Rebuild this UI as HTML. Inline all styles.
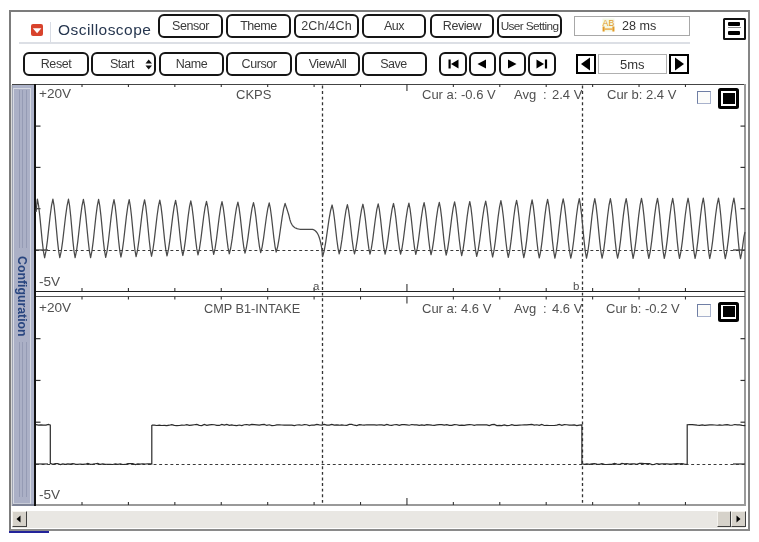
<!DOCTYPE html>
<html><head><meta charset="utf-8">
<style>
*{box-sizing:border-box;margin:0;padding:0}
html,body{width:759px;height:542px;overflow:hidden;background:#fff;font-family:"Liberation Sans",sans-serif;-webkit-font-smoothing:antialiased}
.lbl,.btn,.t{will-change:transform}
.a{position:absolute}
.btn{position:absolute;border:2px solid #151515;border-radius:6px;background:#fff;color:#3a3a3a;font-size:12.5px;text-align:center;white-space:nowrap;line-height:21.5px;letter-spacing:-0.45px}
.nb{position:absolute;border:2px solid #151515;border-radius:6px;background:#fff;top:52px;width:27.5px;height:24px}
.lbl{position:absolute;font-size:13px;color:#505050;white-space:nowrap;line-height:12px}
</style></head><body>
<!-- outer frame -->
<div class="a" style="left:9px;top:10px;width:741px;height:521px;border:2px solid #7c7c7c;border-right-color:#858585;border-bottom-color:#8a8a8a"></div>
<div class="a" style="left:9px;top:530.6px;width:40px;height:2.4px;background:#23239a"></div>

<!-- header row 1 -->
<div class="a" style="left:30.5px;top:24px;width:12px;height:12px;background:#d8432c;border-radius:2px"></div>
<svg class="a" style="left:30.5px;top:24px" width="12" height="12"><path d="M1.8 4.3 L10.4 4.3 L6.1 9.3 Z" fill="#fff"/></svg>
<div class="a" style="left:50px;top:22px;width:1px;height:20px;background:#d8dce4"></div>
<div class="a t" style="left:58px;top:19.5px;font-size:15.5px;letter-spacing:0.45px;color:#26364f;line-height:20px;white-space:nowrap">Oscilloscope</div>
<div class="a" style="left:19px;top:42px;width:671px;height:1.5px;background:#dcdfe5"></div>

<div class="btn" style="left:158px;top:14px;width:65px;height:24px">Sensor</div>
<div class="btn" style="left:226px;top:14px;width:65px;height:24px">Theme</div>
<div class="btn" style="left:294px;top:14px;width:65px;height:24px;letter-spacing:0.2px">2Ch/4Ch</div>
<div class="btn" style="left:362px;top:14px;width:64px;height:24px">Aux</div>
<div class="btn" style="left:430px;top:14px;width:64px;height:24px">Review</div>
<div class="btn" style="left:497px;top:14px;width:65px;height:24px;letter-spacing:-0.6px;font-size:11.8px;line-height:20px">User Setting</div>

<div class="a" style="left:574px;top:16px;width:116px;height:20px;border:1px solid #a8a8a8"></div>
<svg class="a" style="left:602px;top:18px" width="13" height="14"><rect x="0.5" y="0.5" width="12" height="13" fill="#f4f8e4"/><text x="0.6" y="7.7" textLength="11.8" lengthAdjust="spacingAndGlyphs" font-size="9.5" font-family="Liberation Sans" fill="#e39a26">AB</text><path d="M1.6 8.6 V13.6 M11.4 8.6 V13.6" stroke="#e39a26" stroke-width="2"/><path d="M2.5 11.1 H10.5" stroke="#e9a540" stroke-width="1.4"/></svg>
<div class="lbl" style="left:622px;top:20px;color:#333;font-size:12.6px">28 ms</div>

<div class="a" style="left:723px;top:18px;width:23px;height:22px;border:2.8px solid #111;border-radius:1.5px"></div>
<div class="a" style="left:728px;top:22px;width:12px;height:4px;background:#000;border-radius:1px"></div>
<div class="a" style="left:727.5px;top:27px;width:13.5px;height:1.4px;background:#8a8a8a"></div>
<div class="a" style="left:728px;top:30.5px;width:12px;height:4px;background:#000;border-radius:1px"></div>

<!-- header row 2 -->
<div class="btn" style="left:23px;top:52px;width:66px;height:24px">Reset</div>
<div class="btn" style="left:91px;top:52px;width:65px;height:24px;text-indent:-3px">Start</div>
<svg class="a" style="left:145px;top:59px" width="8" height="11"><path d="M0.5 4.5 L3.7 0.5 L7 4.5 Z M0.5 6.5 L3.7 10.5 L7 6.5 Z" fill="#111"/></svg>
<div class="btn" style="left:159px;top:52px;width:65px;height:24px">Name</div>
<div class="btn" style="left:226px;top:52px;width:66px;height:24px">Cursor</div>
<div class="btn" style="left:295px;top:52px;width:65px;height:24px">ViewAll</div>
<div class="btn" style="left:362px;top:52px;width:65px;height:24px;text-indent:-2px">Save</div>

<div class="nb" style="left:439px"></div>
<div class="nb" style="left:468.5px"></div>
<div class="nb" style="left:498.5px"></div>
<div class="nb" style="left:528px"></div>
<svg class="a" style="left:430px;top:52px" width="130" height="24">
<path d="M19.6 7.5 V16.5" stroke="#000" stroke-width="2.2"/>
<path d="M21 12 L28.5 7.5 V16.5 Z" fill="#000"/>
<path d="M47.5 12 L56 7.5 V16.5 Z" fill="#000"/>
<path d="M78 7.5 V16.5 L86.5 12 Z" fill="#000"/>
<path d="M106.5 7.5 V16.5 L114 12 Z" fill="#000"/>
<path d="M116 7.5 V16.5" stroke="#000" stroke-width="2.2"/>
</svg>

<div class="a" style="left:576px;top:54px;width:20px;height:20px;border:2.2px solid #000"></div>
<svg class="a" style="left:576px;top:54px" width="20" height="20"><path d="M5 10 L14 3.5 V16.5 Z" fill="#000"/></svg>
<div class="a" style="left:598px;top:54px;width:69px;height:20px;border:1px solid #b0b0b0"></div>
<div class="lbl" style="left:620px;top:59px;color:#333">5ms</div>
<div class="a" style="left:669px;top:54px;width:20px;height:20px;border:2.2px solid #000"></div>
<svg class="a" style="left:669px;top:54px" width="20" height="20"><path d="M6 3.5 V16.5 L15 10 Z" fill="#000"/></svg>

<!-- sidebar -->
<div class="a" style="left:10.5px;top:85px;width:1.5px;height:421px;background:#dadada"></div>
<div class="a" style="left:12px;top:84px;width:23px;height:422px;background:#adb3c9;border-left:1px solid #9ea3b2;border-bottom:2px solid #7d8396"></div>
<div class="a" style="left:13px;top:87.5px;width:18px;height:416px;border:1.5px solid #d6d9e2;border-bottom-color:#c8ccd8;background:#abb0c6"></div>
<div class="a" style="left:18.5px;top:90px;width:1px;height:158px;background:#959bb4"></div>
<div class="a" style="left:22px;top:90px;width:1px;height:158px;background:#959bb4"></div>
<div class="a" style="left:25.5px;top:90px;width:1px;height:158px;background:#959bb4"></div>
<div class="a" style="left:18.5px;top:342px;width:1px;height:155px;background:#959bb4"></div>
<div class="a" style="left:22px;top:342px;width:1px;height:155px;background:#959bb4"></div>
<div class="a" style="left:25.5px;top:342px;width:1px;height:155px;background:#959bb4"></div>
<div class="a t" style="left:-18px;top:288.5px;width:80px;height:14px;transform:rotate(90deg);font-size:12.3px;font-weight:bold;color:#28457f;line-height:14px;text-align:center;white-space:nowrap">Configuration</div>
<!-- graph frame -->
<div class="a" style="left:12px;top:83.5px;width:734px;height:1.5px;background:#444"></div>
<div class="a" style="left:34px;top:84px;width:712px;height:422px;border-right:2px solid #9a9a9a;border-bottom:2px solid #999"></div>
<div class="a" style="left:34px;top:84px;width:2px;height:422px;background:#111"></div>

<!-- chart borders -->
<div class="a" style="left:36px;top:290.5px;width:709px;height:1.5px;background:#222"></div>
<div class="a" style="left:36px;top:296.2px;width:709px;height:1.2px;background:#555"></div>

<svg class="a" style="left:0;top:0" width="759" height="542"><line x1="82.00" y1="84.00" x2="82.00" y2="87.00" stroke="#333" stroke-width="1.1"/>
<line x1="82.00" y1="291.00" x2="82.00" y2="288.00" stroke="#333" stroke-width="1.1"/>
<line x1="128.42" y1="84.00" x2="128.42" y2="87.00" stroke="#333" stroke-width="1.1"/>
<line x1="128.42" y1="291.00" x2="128.42" y2="288.00" stroke="#333" stroke-width="1.1"/>
<line x1="174.84" y1="84.00" x2="174.84" y2="87.00" stroke="#333" stroke-width="1.1"/>
<line x1="174.84" y1="291.00" x2="174.84" y2="288.00" stroke="#333" stroke-width="1.1"/>
<line x1="221.26" y1="84.00" x2="221.26" y2="87.00" stroke="#333" stroke-width="1.1"/>
<line x1="221.26" y1="291.00" x2="221.26" y2="288.00" stroke="#333" stroke-width="1.1"/>
<line x1="267.68" y1="84.00" x2="267.68" y2="87.00" stroke="#333" stroke-width="1.1"/>
<line x1="267.68" y1="291.00" x2="267.68" y2="288.00" stroke="#333" stroke-width="1.1"/>
<line x1="314.10" y1="84.00" x2="314.10" y2="87.00" stroke="#333" stroke-width="1.1"/>
<line x1="314.10" y1="291.00" x2="314.10" y2="288.00" stroke="#333" stroke-width="1.1"/>
<line x1="360.52" y1="84.00" x2="360.52" y2="87.00" stroke="#333" stroke-width="1.1"/>
<line x1="360.52" y1="291.00" x2="360.52" y2="288.00" stroke="#333" stroke-width="1.1"/>
<line x1="406.94" y1="84.00" x2="406.94" y2="91.00" stroke="#333" stroke-width="1.1"/>
<line x1="406.94" y1="291.00" x2="406.94" y2="284.00" stroke="#333" stroke-width="1.1"/>
<line x1="453.36" y1="84.00" x2="453.36" y2="87.00" stroke="#333" stroke-width="1.1"/>
<line x1="453.36" y1="291.00" x2="453.36" y2="288.00" stroke="#333" stroke-width="1.1"/>
<line x1="499.78" y1="84.00" x2="499.78" y2="87.00" stroke="#333" stroke-width="1.1"/>
<line x1="499.78" y1="291.00" x2="499.78" y2="288.00" stroke="#333" stroke-width="1.1"/>
<line x1="546.20" y1="84.00" x2="546.20" y2="87.00" stroke="#333" stroke-width="1.1"/>
<line x1="546.20" y1="291.00" x2="546.20" y2="288.00" stroke="#333" stroke-width="1.1"/>
<line x1="592.62" y1="84.00" x2="592.62" y2="87.00" stroke="#333" stroke-width="1.1"/>
<line x1="592.62" y1="291.00" x2="592.62" y2="288.00" stroke="#333" stroke-width="1.1"/>
<line x1="639.04" y1="84.00" x2="639.04" y2="87.00" stroke="#333" stroke-width="1.1"/>
<line x1="639.04" y1="291.00" x2="639.04" y2="288.00" stroke="#333" stroke-width="1.1"/>
<line x1="685.46" y1="84.00" x2="685.46" y2="87.00" stroke="#333" stroke-width="1.1"/>
<line x1="685.46" y1="291.00" x2="685.46" y2="288.00" stroke="#333" stroke-width="1.1"/>
<line x1="36.00" y1="126.10" x2="40.50" y2="126.10" stroke="#333" stroke-width="1.2"/>
<line x1="745.00" y1="126.10" x2="740.50" y2="126.10" stroke="#333" stroke-width="1.2"/>
<line x1="36.00" y1="167.40" x2="40.50" y2="167.40" stroke="#333" stroke-width="1.2"/>
<line x1="745.00" y1="167.40" x2="740.50" y2="167.40" stroke="#333" stroke-width="1.2"/>
<line x1="36.00" y1="208.70" x2="40.50" y2="208.70" stroke="#333" stroke-width="1.2"/>
<line x1="745.00" y1="208.70" x2="740.50" y2="208.70" stroke="#333" stroke-width="1.2"/>
<line x1="36.00" y1="250.00" x2="48.00" y2="250.00" stroke="#333" stroke-width="1.2"/>
<line x1="745.00" y1="250.00" x2="733.00" y2="250.00" stroke="#333" stroke-width="1.2"/>
<line x1="82.00" y1="296.50" x2="82.00" y2="299.50" stroke="#333" stroke-width="1.1"/>
<line x1="82.00" y1="505.00" x2="82.00" y2="502.00" stroke="#333" stroke-width="1.1"/>
<line x1="128.42" y1="296.50" x2="128.42" y2="299.50" stroke="#333" stroke-width="1.1"/>
<line x1="128.42" y1="505.00" x2="128.42" y2="502.00" stroke="#333" stroke-width="1.1"/>
<line x1="174.84" y1="296.50" x2="174.84" y2="299.50" stroke="#333" stroke-width="1.1"/>
<line x1="174.84" y1="505.00" x2="174.84" y2="502.00" stroke="#333" stroke-width="1.1"/>
<line x1="221.26" y1="296.50" x2="221.26" y2="299.50" stroke="#333" stroke-width="1.1"/>
<line x1="221.26" y1="505.00" x2="221.26" y2="502.00" stroke="#333" stroke-width="1.1"/>
<line x1="267.68" y1="296.50" x2="267.68" y2="299.50" stroke="#333" stroke-width="1.1"/>
<line x1="267.68" y1="505.00" x2="267.68" y2="502.00" stroke="#333" stroke-width="1.1"/>
<line x1="314.10" y1="296.50" x2="314.10" y2="299.50" stroke="#333" stroke-width="1.1"/>
<line x1="314.10" y1="505.00" x2="314.10" y2="502.00" stroke="#333" stroke-width="1.1"/>
<line x1="360.52" y1="296.50" x2="360.52" y2="299.50" stroke="#333" stroke-width="1.1"/>
<line x1="360.52" y1="505.00" x2="360.52" y2="502.00" stroke="#333" stroke-width="1.1"/>
<line x1="406.94" y1="296.50" x2="406.94" y2="303.50" stroke="#333" stroke-width="1.1"/>
<line x1="406.94" y1="505.00" x2="406.94" y2="498.00" stroke="#333" stroke-width="1.1"/>
<line x1="453.36" y1="296.50" x2="453.36" y2="299.50" stroke="#333" stroke-width="1.1"/>
<line x1="453.36" y1="505.00" x2="453.36" y2="502.00" stroke="#333" stroke-width="1.1"/>
<line x1="499.78" y1="296.50" x2="499.78" y2="299.50" stroke="#333" stroke-width="1.1"/>
<line x1="499.78" y1="505.00" x2="499.78" y2="502.00" stroke="#333" stroke-width="1.1"/>
<line x1="546.20" y1="296.50" x2="546.20" y2="299.50" stroke="#333" stroke-width="1.1"/>
<line x1="546.20" y1="505.00" x2="546.20" y2="502.00" stroke="#333" stroke-width="1.1"/>
<line x1="592.62" y1="296.50" x2="592.62" y2="299.50" stroke="#333" stroke-width="1.1"/>
<line x1="592.62" y1="505.00" x2="592.62" y2="502.00" stroke="#333" stroke-width="1.1"/>
<line x1="639.04" y1="296.50" x2="639.04" y2="299.50" stroke="#333" stroke-width="1.1"/>
<line x1="639.04" y1="505.00" x2="639.04" y2="502.00" stroke="#333" stroke-width="1.1"/>
<line x1="685.46" y1="296.50" x2="685.46" y2="299.50" stroke="#333" stroke-width="1.1"/>
<line x1="685.46" y1="505.00" x2="685.46" y2="502.00" stroke="#333" stroke-width="1.1"/>
<line x1="36.00" y1="338.67" x2="40.50" y2="338.67" stroke="#333" stroke-width="1.2"/>
<line x1="745.00" y1="338.67" x2="740.50" y2="338.67" stroke="#333" stroke-width="1.2"/>
<line x1="36.00" y1="380.44" x2="40.50" y2="380.44" stroke="#333" stroke-width="1.2"/>
<line x1="745.00" y1="380.44" x2="740.50" y2="380.44" stroke="#333" stroke-width="1.2"/>
<line x1="36.00" y1="422.21" x2="40.50" y2="422.21" stroke="#333" stroke-width="1.2"/>
<line x1="745.00" y1="422.21" x2="740.50" y2="422.21" stroke="#333" stroke-width="1.2"/>
<line x1="36.00" y1="463.98" x2="48.00" y2="463.98" stroke="#333" stroke-width="1.2"/>
<line x1="745.00" y1="463.98" x2="733.00" y2="463.98" stroke="#333" stroke-width="1.2"/>
<line x1="36.0" y1="250.5" x2="745.0" y2="250.5" stroke="#3a3a3a" stroke-width="1.2" stroke-dasharray="2.9 2.7"/>
<line x1="36.0" y1="464.5" x2="745.0" y2="464.5" stroke="#3a3a3a" stroke-width="1.2" stroke-dasharray="2.9 2.7"/>
<line x1="322.5" y1="85.5" x2="322.5" y2="505.0" stroke="#333" stroke-width="1.3" stroke-dasharray="2.9 2.7"/>
<line x1="582.5" y1="85.5" x2="582.5" y2="505.0" stroke="#333" stroke-width="1.3" stroke-dasharray="2.9 2.7"/>
<path d="M36.00 212.00 L36.23 210.55 L36.47 208.27 L36.70 205.50 L36.93 202.74 L37.17 200.46 L37.40 199.01 L38.60 205.58 L39.80 215.90 L41.00 228.38 L42.20 240.87 L43.40 251.19 L44.60 257.76 L45.98 251.20 L47.37 240.90 L48.75 228.44 L50.13 215.98 L51.52 205.68 L52.90 199.12 L54.05 205.67 L55.20 215.96 L56.35 228.40 L57.50 240.85 L58.65 251.14 L59.80 257.69 L61.25 251.15 L62.70 240.88 L64.15 228.46 L65.60 216.04 L67.05 205.77 L68.50 199.23 L69.60 205.76 L70.70 216.01 L71.80 228.42 L72.90 240.83 L74.00 251.09 L75.10 257.62 L76.48 251.10 L77.87 240.86 L79.25 228.47 L80.63 216.09 L82.02 205.85 L83.40 199.33 L84.60 205.84 L85.80 216.07 L87.00 228.44 L88.20 240.81 L89.40 251.03 L90.60 257.54 L91.93 251.05 L93.27 240.84 L94.60 228.49 L95.93 216.14 L97.27 205.94 L98.60 199.44 L99.78 205.92 L100.97 216.09 L102.15 228.40 L103.33 240.71 L104.52 250.88 L105.70 257.36 L107.08 250.90 L108.47 240.74 L109.85 228.46 L111.23 216.17 L112.62 206.01 L114.00 199.55 L115.15 205.97 L116.30 216.06 L117.45 228.27 L118.60 240.48 L119.75 250.57 L120.90 257.00 L122.28 250.58 L123.67 240.51 L125.05 228.33 L126.43 216.14 L127.82 206.07 L129.20 199.65 L130.35 206.03 L131.50 216.03 L132.65 228.14 L133.80 240.25 L134.95 250.26 L136.10 256.63 L137.52 250.27 L138.93 240.28 L140.35 228.20 L141.77 216.11 L143.18 206.12 L144.60 199.76 L145.75 206.08 L146.90 216.00 L148.05 228.01 L149.20 240.02 L150.35 249.94 L151.50 256.26 L152.88 249.97 L154.27 240.10 L155.65 228.16 L157.03 216.22 L158.42 206.35 L159.80 200.06 L161.00 206.30 L162.20 216.11 L163.40 227.97 L164.60 239.84 L165.80 249.64 L167.00 255.89 L168.43 249.69 L169.87 239.96 L171.30 228.18 L172.73 216.41 L174.17 206.68 L175.60 200.48 L176.80 206.64 L178.00 216.30 L179.20 227.99 L180.40 239.69 L181.60 249.35 L182.80 255.50 L184.13 249.40 L185.47 239.80 L186.80 228.20 L188.13 216.59 L189.47 207.00 L190.80 200.89 L192.00 206.93 L193.20 216.43 L194.40 227.91 L195.60 239.40 L196.80 248.89 L198.00 254.94 L199.42 248.94 L200.83 239.52 L202.25 228.12 L203.67 216.72 L205.08 207.30 L206.50 201.31 L207.70 207.24 L208.90 216.56 L210.10 227.83 L211.30 239.10 L212.50 248.41 L213.70 254.34 L215.08 248.46 L216.47 239.22 L217.85 228.03 L219.23 216.85 L220.62 207.61 L222.00 201.72 L223.22 207.54 L224.43 216.68 L225.65 227.74 L226.87 238.80 L228.08 247.94 L229.30 253.76 L230.73 247.98 L232.17 238.92 L233.60 227.95 L235.03 216.98 L236.47 207.92 L237.90 202.14 L239.08 207.85 L240.27 216.81 L241.45 227.66 L242.63 238.50 L243.82 247.46 L245.00 253.17 L246.42 247.51 L247.83 238.62 L249.25 227.86 L250.67 217.11 L252.08 208.22 L253.50 202.56 L254.70 208.15 L255.90 216.94 L257.10 227.57 L258.30 238.20 L259.50 246.98 L260.70 252.58 L262.12 247.03 L263.53 238.32 L264.95 227.78 L266.37 217.24 L267.78 208.53 L269.20 202.98 L270.37 208.46 L271.53 217.07 L272.70 227.49 L273.87 237.91 L275.03 246.52 L276.20 252.00 L277.68 246.56 L279.17 238.03 L280.65 227.70 L282.13 217.37 L283.62 208.84 L285.10 203.40 L285.74 205.38 L286.68 208.23 L287.67 211.32 L288.50 214.00 L289.08 216.16 L289.54 218.11 L289.98 219.89 L290.50 221.50 L291.10 222.95 L291.74 224.22 L292.43 225.34 L293.20 226.30 L294.04 227.09 L294.96 227.70 L295.94 228.19 L297.00 228.60 L298.14 228.92 L299.36 229.14 L300.65 229.29 L302.00 229.40 L303.46 229.46 L305.03 229.45 L306.58 229.42 L308.00 229.40 L309.27 229.36 L310.44 229.30 L311.52 229.29 L312.50 229.40 L313.36 229.63 L314.11 229.95 L314.80 230.39 L315.50 231.00 L316.23 231.76 L316.95 232.66 L317.65 233.73 L318.30 235.00 L318.91 236.54 L319.49 238.31 L320.03 240.18 L320.50 242.00 L320.90 243.73 L321.24 245.46 L321.53 247.20 L321.80 249.00 L322.05 251.06 L322.28 253.29 L322.47 255.30 L322.60 256.70 L324.18 250.92 L325.77 241.84 L327.35 230.85 L328.93 219.86 L330.52 210.78 L332.10 205.00 L333.28 210.46 L334.47 219.03 L335.65 229.40 L336.83 239.77 L338.02 248.34 L339.20 253.80 L340.57 248.30 L341.93 239.66 L343.30 229.21 L344.67 218.76 L346.03 210.12 L347.40 204.62 L348.58 210.13 L349.77 218.79 L350.95 229.26 L352.13 239.73 L353.32 248.39 L354.50 253.90 L355.90 248.35 L357.30 239.62 L358.70 229.07 L360.10 218.52 L361.50 209.79 L362.90 204.24 L364.08 209.81 L365.27 218.55 L366.45 229.12 L367.63 239.70 L368.82 248.44 L370.00 254.00 L371.37 248.40 L372.73 239.59 L374.10 228.93 L375.47 218.28 L376.83 209.47 L378.20 203.86 L379.35 209.48 L380.50 218.31 L381.65 228.98 L382.80 239.66 L383.95 248.48 L385.10 254.10 L386.50 248.44 L387.90 239.55 L389.30 228.79 L390.70 218.04 L392.10 209.15 L393.50 203.49 L394.68 209.16 L395.87 218.07 L397.05 228.85 L398.23 239.63 L399.42 248.54 L400.60 254.21 L401.98 248.49 L403.37 239.51 L404.75 228.65 L406.13 217.78 L407.52 208.80 L408.90 203.09 L410.05 208.83 L411.20 217.86 L412.35 228.78 L413.50 239.70 L414.65 248.73 L415.80 254.47 L417.18 248.68 L418.57 239.59 L419.95 228.58 L421.33 217.58 L422.72 208.48 L424.10 202.69 L425.25 208.51 L426.40 217.66 L427.55 228.72 L428.70 239.78 L429.85 248.92 L431.00 254.74 L432.38 248.87 L433.77 239.66 L435.15 228.52 L436.53 217.37 L437.92 208.16 L439.30 202.30 L440.45 208.19 L441.60 217.45 L442.75 228.65 L443.90 239.85 L445.05 249.11 L446.20 255.01 L447.60 249.07 L449.00 239.74 L450.40 228.45 L451.80 217.17 L453.20 207.84 L454.60 201.90 L455.78 207.92 L456.97 217.36 L458.15 228.79 L459.33 240.22 L460.52 249.67 L461.70 255.68 L463.05 249.62 L464.40 240.11 L465.75 228.59 L467.10 217.08 L468.45 207.56 L469.80 201.51 L470.95 207.64 L472.10 217.27 L473.25 228.92 L474.40 240.57 L475.55 250.20 L476.70 256.33 L478.20 250.16 L479.70 240.46 L481.20 228.72 L482.70 216.99 L484.20 207.28 L485.70 201.11 L486.85 207.36 L488.00 217.18 L489.15 229.06 L490.30 240.94 L491.45 250.76 L492.60 257.01 L493.98 250.72 L495.37 240.83 L496.75 228.87 L498.13 216.91 L499.52 207.02 L500.90 200.73 L502.13 207.06 L503.37 217.00 L504.60 229.03 L505.83 241.06 L507.07 251.01 L508.30 257.34 L509.68 250.96 L511.07 240.95 L512.45 228.84 L513.83 216.72 L515.22 206.71 L516.60 200.34 L517.80 206.75 L519.00 216.82 L520.20 229.00 L521.40 241.18 L522.60 251.25 L523.80 257.66 L525.18 251.20 L526.57 241.06 L527.95 228.79 L529.33 216.52 L530.72 206.37 L532.10 199.92 L533.30 206.41 L534.50 216.61 L535.70 228.95 L536.90 241.29 L538.10 251.49 L539.30 257.99 L540.68 251.42 L542.07 241.11 L543.45 228.64 L544.83 216.17 L546.22 205.86 L547.60 199.30 L548.82 205.87 L550.03 216.19 L551.25 228.67 L552.47 241.15 L553.68 251.47 L554.90 258.04 L556.28 251.42 L557.67 241.01 L559.05 228.41 L560.43 215.82 L561.82 205.41 L563.20 198.79 L564.47 205.42 L565.73 215.84 L567.00 228.44 L568.27 241.04 L569.53 251.46 L570.80 258.09 L572.22 251.45 L573.63 241.02 L575.05 228.40 L576.47 215.79 L577.88 205.36 L579.30 198.72 L580.50 205.36 L581.70 215.80 L582.90 228.43 L584.10 241.05 L585.30 251.49 L586.50 258.14 L587.88 251.48 L589.27 241.03 L590.65 228.39 L592.03 215.75 L593.42 205.30 L594.80 198.65 L596.02 205.31 L597.23 215.77 L598.45 228.42 L599.67 241.07 L600.88 251.52 L602.10 258.18 L603.48 251.52 L604.87 241.05 L606.25 228.38 L607.63 215.72 L609.02 205.25 L610.40 198.58 L611.60 205.25 L612.80 215.73 L614.00 228.40 L615.20 241.08 L616.40 251.56 L617.60 258.23 L619.03 251.55 L620.47 241.06 L621.90 228.37 L623.33 215.68 L624.77 205.19 L626.20 198.51 L627.35 205.20 L628.50 215.69 L629.65 228.39 L630.80 241.09 L631.95 251.59 L633.10 258.27 L634.50 251.58 L635.90 241.07 L637.30 228.36 L638.70 215.65 L640.10 205.14 L641.50 198.45 L642.72 205.14 L643.93 215.66 L645.15 228.38 L646.37 241.11 L647.58 251.62 L648.80 258.32 L650.25 251.61 L651.70 241.09 L653.15 228.35 L654.60 215.61 L656.05 205.08 L657.50 198.38 L658.63 205.09 L659.77 215.62 L660.90 228.37 L662.03 241.12 L663.17 251.65 L664.30 258.36 L665.70 251.65 L667.10 241.10 L668.50 228.34 L669.90 215.58 L671.30 205.03 L672.70 198.31 L673.83 205.03 L674.97 215.59 L676.10 228.36 L677.23 241.13 L678.37 251.69 L679.50 258.41 L680.93 251.68 L682.37 241.11 L683.80 228.33 L685.23 215.54 L686.67 204.97 L688.10 198.25 L689.27 204.98 L690.43 215.56 L691.60 228.35 L692.77 241.14 L693.93 251.72 L695.10 258.45 L696.47 251.71 L697.83 241.13 L699.20 228.32 L700.57 215.51 L701.93 204.92 L703.30 198.18 L704.37 204.93 L705.43 215.52 L706.50 228.34 L707.57 241.16 L708.63 251.75 L709.70 258.50 L711.17 251.74 L712.63 241.14 L714.10 228.31 L715.57 215.47 L717.03 204.87 L718.50 198.11 L719.63 204.87 L720.77 215.49 L721.90 228.33 L723.03 241.17 L724.17 251.78 L725.30 258.54 L726.73 251.78 L728.17 241.15 L729.60 228.30 L731.03 215.44 L732.47 204.81 L733.90 198.05 L735.00 204.82 L736.10 215.45 L737.20 228.32 L738.30 241.18 L739.40 251.82 L740.50 258.59 L741.62 253.45 L742.75 245.29 L743.88 237.13 L745.00 232.00" fill="none" stroke="#4a4a4a" stroke-width="1.25" stroke-linejoin="round"/>
<path d="M36.00 424.69 L38.50 425.05 L41.00 424.84 L43.50 425.12 L46.00 425.15 L48.50 424.48 L50.00 425.00 L50.30 425.00 L50.30 464.00 L50.30 463.42 L52.80 464.40 L55.30 463.71 L57.80 463.68 L60.30 464.59 L62.80 463.96 L65.30 464.40 L67.80 463.97 L70.30 464.17 L72.80 463.58 L75.30 464.16 L77.80 464.44 L80.30 464.03 L82.80 464.29 L85.30 464.21 L87.80 463.48 L90.30 464.31 L92.80 464.11 L95.30 463.76 L97.80 463.44 L100.30 464.44 L102.80 463.97 L105.30 464.26 L107.80 464.45 L110.30 464.26 L112.80 464.51 L115.30 463.87 L117.80 464.36 L120.30 463.93 L122.80 464.52 L125.30 464.45 L127.80 463.52 L130.30 463.56 L132.80 463.66 L135.30 464.56 L137.80 463.92 L140.30 464.15 L142.80 463.76 L145.30 464.01 L147.80 463.86 L150.30 463.82 L151.80 464.00 L151.80 464.00 L151.80 425.00 L151.80 425.10 L154.30 425.10 L156.80 425.49 L159.30 425.22 L161.80 425.51 L164.30 425.43 L166.80 425.59 L169.30 425.21 L171.80 424.60 L174.30 425.43 L176.80 425.56 L179.30 425.49 L181.80 425.08 L184.30 425.26 L186.80 424.65 L189.30 425.40 L191.80 425.09 L194.30 424.74 L196.80 424.48 L199.30 425.42 L201.80 425.59 L204.30 424.51 L206.80 425.36 L209.30 424.89 L211.80 424.58 L214.30 424.75 L216.80 425.32 L219.30 425.45 L221.80 424.45 L224.30 425.14 L226.80 424.45 L229.30 425.26 L231.80 424.80 L234.30 425.46 L236.80 425.58 L239.30 425.01 L241.80 425.60 L244.30 424.77 L246.80 424.49 L249.30 425.12 L251.80 424.44 L254.30 424.64 L256.80 424.89 L259.30 425.13 L261.80 424.59 L264.30 424.45 L266.80 425.44 L269.30 424.78 L271.80 425.55 L274.30 425.48 L276.80 424.85 L279.30 424.95 L281.80 425.02 L284.30 425.17 L286.80 425.11 L289.30 425.07 L291.80 425.14 L294.30 425.53 L296.80 425.01 L299.30 424.92 L301.80 425.26 L304.30 424.69 L306.80 424.76 L309.30 425.57 L311.80 425.03 L314.30 425.06 L316.80 424.41 L319.30 424.90 L321.80 425.10 L324.30 424.42 L326.80 425.14 L329.30 425.16 L331.80 424.47 L334.30 425.15 L336.80 424.96 L339.30 425.22 L341.80 424.82 L344.30 425.25 L346.80 425.29 L349.30 424.43 L351.80 424.47 L354.30 425.21 L356.80 425.56 L359.30 424.70 L361.80 424.95 L364.30 425.11 L366.80 424.78 L369.30 424.84 L371.80 424.78 L374.30 424.84 L376.80 425.11 L379.30 424.76 L381.80 424.85 L384.30 425.33 L386.80 424.43 L389.30 425.08 L391.80 425.28 L394.30 424.77 L396.80 424.67 L399.30 425.36 L401.80 424.69 L404.30 424.62 L406.80 424.92 L409.30 425.24 L411.80 424.52 L414.30 424.79 L416.80 424.80 L419.30 425.40 L421.80 424.93 L424.30 425.43 L426.80 424.60 L429.30 424.80 L431.80 425.18 L434.30 425.46 L436.80 424.94 L439.30 424.67 L441.80 424.55 L444.30 425.04 L446.80 424.63 L449.30 425.37 L451.80 425.41 L454.30 424.62 L456.80 424.73 L459.30 425.37 L461.80 425.17 L464.30 425.37 L466.80 424.81 L469.30 424.56 L471.80 424.75 L474.30 425.35 L476.80 424.73 L479.30 424.82 L481.80 424.90 L484.30 424.90 L486.80 424.89 L489.30 425.50 L491.80 424.59 L494.30 424.41 L496.80 425.53 L499.30 425.46 L501.80 425.58 L504.30 424.92 L506.80 425.54 L509.30 425.51 L511.80 424.67 L514.30 425.29 L516.80 425.40 L519.30 425.20 L521.80 425.02 L524.30 424.75 L526.80 424.81 L529.30 424.67 L531.80 424.48 L534.30 425.11 L536.80 424.74 L539.30 425.37 L541.80 424.45 L544.30 425.48 L546.80 425.23 L549.30 425.51 L551.80 425.48 L554.30 425.48 L556.80 425.09 L559.30 424.42 L561.80 425.29 L564.30 424.61 L566.80 424.76 L569.30 425.20 L571.80 425.03 L574.30 424.90 L576.80 425.53 L579.30 425.13 L581.80 424.81 L581.90 425.00 L581.90 425.00 L581.90 464.00 L581.90 463.70 L584.40 464.43 L586.90 463.97 L589.40 464.34 L591.90 463.82 L594.40 463.64 L596.90 464.04 L599.40 464.38 L601.90 463.61 L604.40 464.35 L606.90 464.51 L609.40 464.37 L611.90 464.39 L614.40 463.41 L616.90 464.15 L619.40 464.44 L621.90 463.46 L624.40 463.73 L626.90 463.72 L629.40 464.03 L631.90 463.91 L634.40 463.97 L636.90 464.33 L639.40 463.40 L641.90 463.47 L644.40 463.55 L646.90 463.55 L649.40 463.48 L651.90 464.57 L654.40 464.43 L656.90 463.50 L659.40 464.00 L661.90 463.78 L664.40 463.78 L666.90 463.82 L669.40 464.18 L671.90 464.10 L674.40 463.83 L676.90 463.63 L679.40 463.79 L681.90 463.55 L684.40 464.07 L686.90 464.26 L687.20 464.00 L687.20 464.00 L687.20 425.00 L687.20 424.86 L689.70 424.50 L692.20 424.61 L694.70 424.85 L697.20 425.13 L699.70 425.34 L702.20 424.86 L704.70 425.36 L707.20 425.15 L709.70 424.92 L712.20 424.85 L714.70 425.00 L717.20 425.24 L719.70 424.90 L722.20 425.23 L724.70 424.95 L727.20 424.69 L729.70 425.04 L732.20 425.23 L734.70 424.49 L737.20 424.91 L739.70 424.91 L742.20 425.46 L744.70 425.52 L745.00 425.00" fill="none" stroke="#2a2a2a" stroke-width="1.2"/></svg>
<!-- chart labels -->
<div class="lbl" style="left:39px;top:88px;font-size:13.6px">+20V</div>
<div class="lbl" style="left:39px;top:275.5px;font-size:13.6px">-5V</div>
<div class="lbl" style="left:236px;top:88.5px">CKPS</div>
<div class="lbl" style="left:421.7px;top:88.5px">Cur a: -0.6 V</div>
<div class="lbl" style="left:514px;top:88.5px">Avg</div>
<div class="lbl" style="left:543px;top:88.5px">:</div>
<div class="lbl" style="left:552px;top:88.5px">2.4 V</div>
<div class="lbl" style="left:607px;top:88.5px">Cur b: 2.4 V</div>
<div class="lbl" style="left:313px;top:279.5px;font-size:11.5px">a</div>
<div class="lbl" style="left:573px;top:279.5px;font-size:11.5px">b</div>
<div class="a" style="left:697px;top:90.5px;width:14px;height:13px;border:1.3px solid #6f7ea4;border-right-color:#a8b2cc;border-bottom-color:#a8b2cc;background:#fcfcfa"></div>
<div class="a" style="left:718px;top:88px;width:21px;height:20.5px;border:3px solid #000;border-radius:2.5px;background:#fff"></div>
<div class="a" style="left:722.5px;top:92.7px;width:12.3px;height:11.3px;background:#000"></div>

<div class="lbl" style="left:39px;top:302px;font-size:13.6px">+20V</div>
<div class="lbl" style="left:39px;top:489px;font-size:13.6px">-5V</div>
<div class="lbl" style="left:203.5px;top:302.5px;font-size:12.7px">CMP B1-INTAKE</div>
<div class="lbl" style="left:421.7px;top:302.5px">Cur a: 4.6 V</div>
<div class="lbl" style="left:514px;top:302.5px">Avg</div>
<div class="lbl" style="left:543px;top:302.5px">:</div>
<div class="lbl" style="left:552px;top:302.5px">4.6 V</div>
<div class="lbl" style="left:606px;top:302.5px">Cur b: -0.2 V</div>
<div class="a" style="left:697px;top:303.5px;width:14px;height:13px;border:1.3px solid #6f7ea4;border-right-color:#a8b2cc;border-bottom-color:#a8b2cc;background:#fcfcfa"></div>
<div class="a" style="left:718px;top:301.5px;width:21px;height:20px;border:3px solid #000;border-radius:2.5px;background:#fff"></div>
<div class="a" style="left:722.5px;top:305.8px;width:12.3px;height:11.2px;background:#000"></div>

<!-- scrollbar -->
<div class="a" style="left:12px;top:511px;width:733px;height:17.3px;background:#e9e7e3"></div>
<div class="a" style="left:12px;top:511px;width:14.5px;height:16px;background:#d6d2ca;border-top:1px solid #f4f2ee;border-left:1px solid #f4f2ee;border-right:1.5px solid #404040;border-bottom:1.5px solid #404040"></div>
<svg class="a" style="left:12px;top:511px" width="15" height="16"><path d="M4.5 8 L8.5 4.5 V11.5 Z" fill="#000"/></svg>
<div class="a" style="left:716.5px;top:511px;width:14.5px;height:16px;background:#d6d2ca;border-top:1px solid #f4f2ee;border-left:1px solid #f4f2ee;border-right:1.5px solid #404040;border-bottom:1.5px solid #404040"></div>
<div class="a" style="left:731px;top:511px;width:14.5px;height:16px;background:#d6d2ca;border-top:1px solid #f4f2ee;border-left:1px solid #f4f2ee;border-right:1.5px solid #404040;border-bottom:1.5px solid #404040"></div>
<svg class="a" style="left:731px;top:511px" width="15" height="16"><path d="M5.5 4.5 V11.5 L9.5 8 Z" fill="#000"/></svg>
</body></html>
